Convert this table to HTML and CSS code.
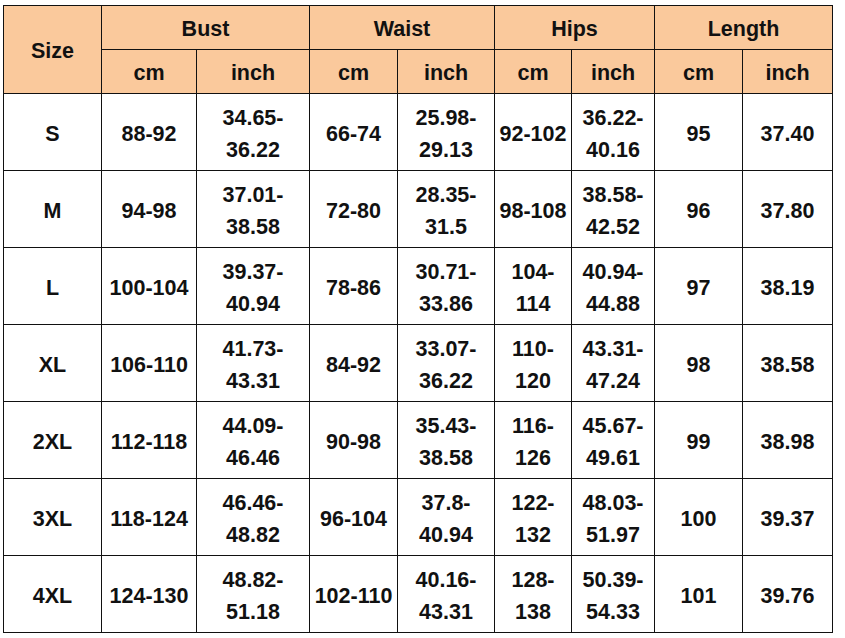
FILE: index.html
```html
<!DOCTYPE html>
<html>
<head>
<meta charset="utf-8">
<link rel="stylesheet" href="styles.css">
</head>
<body>
<table class="size-table">
  <colgroup>
    <col class="c1"><col class="c2"><col class="c3"><col class="c4"><col class="c5"><col class="c6"><col class="c7"><col class="c8"><col class="c9">
  </colgroup>
  <thead>
    <tr class="hrow">
      <th rowspan="2">Size</th>
      <th colspan="2">Bust</th>
      <th colspan="2">Waist</th>
      <th colspan="2">Hips</th>
      <th colspan="2">Length</th>
    </tr>
    <tr class="hrow">
      <th>cm</th><th>inch</th><th>cm</th><th>inch</th><th>cm</th><th>inch</th><th>cm</th><th>inch</th>
    </tr>
  </thead>
  <tbody>
    <tr><td>S</td><td>88-92</td><td>34.65-<br>36.22</td><td>66-74</td><td>25.98-<br>29.13</td><td>92-102</td><td>36.22-<br>40.16</td><td>95</td><td>37.40</td></tr>
    <tr><td>M</td><td>94-98</td><td>37.01-<br>38.58</td><td>72-80</td><td>28.35-<br>31.5</td><td>98-108</td><td>38.58-<br>42.52</td><td>96</td><td>37.80</td></tr>
    <tr><td>L</td><td>100-104</td><td>39.37-<br>40.94</td><td>78-86</td><td>30.71-<br>33.86</td><td>104-<br>114</td><td>40.94-<br>44.88</td><td>97</td><td>38.19</td></tr>
    <tr><td>XL</td><td>106-110</td><td>41.73-<br>43.31</td><td>84-92</td><td>33.07-<br>36.22</td><td>110-<br>120</td><td>43.31-<br>47.24</td><td>98</td><td>38.58</td></tr>
    <tr><td>2XL</td><td>112-118</td><td>44.09-<br>46.46</td><td>90-98</td><td>35.43-<br>38.58</td><td>116-<br>126</td><td>45.67-<br>49.61</td><td>99</td><td>38.98</td></tr>
    <tr><td>3XL</td><td>118-124</td><td>46.46-<br>48.82</td><td>96-104</td><td>37.8-<br>40.94</td><td>122-<br>132</td><td>48.03-<br>51.97</td><td>100</td><td>39.37</td></tr>
    <tr><td>4XL</td><td>124-130</td><td>48.82-<br>51.18</td><td>102-110</td><td>40.16-<br>43.31</td><td>128-<br>138</td><td>50.39-<br>54.33</td><td>101</td><td>39.76</td></tr>
  </tbody>
</table>
</body>
</html>
```
FILE: styles.css
```css
html, body {
  margin: 0;
  padding: 0;
  background: #ffffff;
}
body {
  padding: 5px 0 0 3px;
}
.size-table {
  border-collapse: collapse;
  table-layout: fixed;
  width: 830px;
  font-family: "Liberation Sans", Arial, sans-serif;
  font-weight: bold;
  font-size: 21.5px;
  color: #111111;
}
.c1 { width: 98px; }
.c2 { width: 95px; }
.c3 { width: 113px; }
.c4 { width: 88px; }
.c5 { width: 97px; }
.c6 { width: 77px; }
.c7 { width: 83px; }
.c8 { width: 88px; }
.c9 { width: 90px; }
.size-table th,
.size-table td {
  border: 1px solid #111111;
  padding: 3px 0 0 0;
  text-align: center;
  vertical-align: middle;
  line-height: 32px;
}
.size-table th {
  background: #fac99c;
  font-weight: bold;
}
.hrow {
  height: 44px;
}
.size-table tbody tr {
  height: 77px;
}
```
